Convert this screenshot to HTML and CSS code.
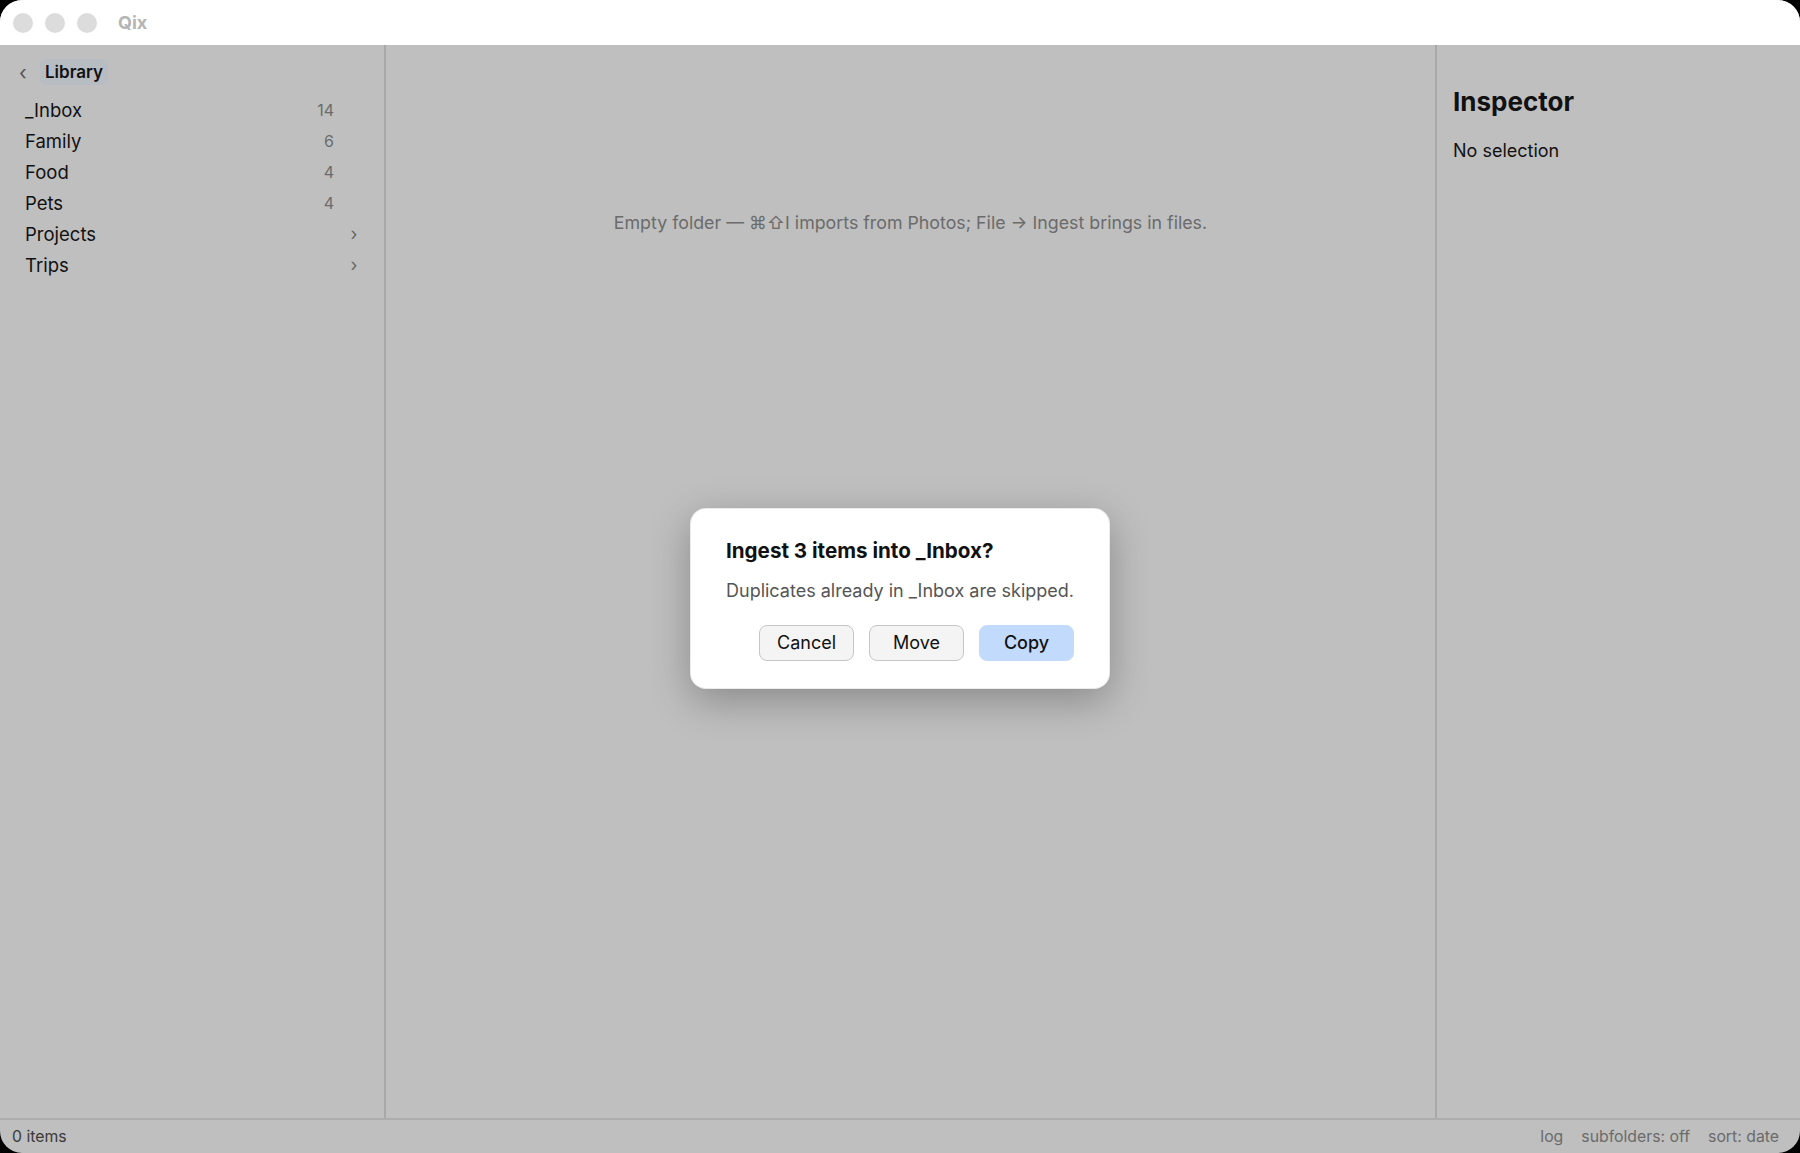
FILE: index.html
```html
<!DOCTYPE html>
<html lang="en">

<head>
    <meta charset="UTF-8">
    <meta name="viewport" content="width=device-width, initial-scale=1.0">
    <title>Qix</title>
    <link rel="stylesheet" href="styles.css">
</head>

<body>

    <div class="window">

        <!-- Title bar -->
        <div class="titlebar">
            <span class="light"></span>
            <span class="light"></span>
            <span class="light"></span>
            <span class="app-name">Qix</span>
        </div>

        <div class="content">

            <!-- Folder sidebar -->
            <aside class="sidebar">
                <div class="back-row">
                    <span class="back-chevron">‹</span>
                    <span class="crumb">Library</span>
                </div>
                <ul class="folders">
                    <li class="folder"><span class="folder-name">_Inbox</span><span class="count">14</span><span class="chev"></span></li>
                    <li class="folder"><span class="folder-name">Family</span><span class="count">6</span><span class="chev"></span></li>
                    <li class="folder"><span class="folder-name">Food</span><span class="count">4</span><span class="chev"></span></li>
                    <li class="folder"><span class="folder-name">Pets</span><span class="count">4</span><span class="chev"></span></li>
                    <li class="folder"><span class="folder-name">Projects</span><span class="count"></span><span class="chev">›</span></li>
                    <li class="folder"><span class="folder-name">Trips</span><span class="count"></span><span class="chev">›</span></li>
                </ul>
            </aside>

            <!-- Grid area -->
            <main class="main">
                <p class="empty-hint">Empty folder — ⌘⇧I imports from Photos; File → Ingest brings in files.</p>
            </main>

            <!-- Inspector -->
            <aside class="inspector">
                <h2 class="inspector-title">Inspector</h2>
                <p class="inspector-empty">No selection</p>
            </aside>

        </div>

        <!-- Status bar -->
        <footer class="statusbar">
            <span class="status-count">0 items</span>
            <span class="status-right">
                <span>log</span>
                <span>subfolders: off</span>
                <span>sort: date</span>
            </span>
        </footer>

        <!-- Ingest confirmation sheet -->
        <div class="overlay">
            <div class="dialog">
                <h3 class="dialog-title">Ingest 3 items into _Inbox?</h3>
                <p class="dialog-text">Duplicates already in _Inbox are skipped.</p>
                <div class="dialog-buttons">
                    <button class="btn">Cancel</button>
                    <button class="btn">Move</button>
                    <button class="btn btn-primary">Copy</button>
                </div>
            </div>
        </div>

    </div>

</body>

</html>
```

FILE: styles.css
```css
body {
    margin: 0;
    background: #000;
    font-family: Inter, "Noto Sans", "DejaVu Sans", sans-serif;
    color: #111;
}

.window {
    position: relative;
    height: 100vh;
    border-radius: 22px;
    overflow: hidden;
    display: flex;
    flex-direction: column;
    background: #bfbfbf;
}

.titlebar {
    height: 45px;
    flex: none;
    background: #fff;
    display: flex;
    align-items: center;
    padding-left: 13px;
    gap: 12px;
}

.light {
    width: 20px;
    height: 20px;
    border-radius: 50%;
    background: #dcdcdc;
}

.app-name {
    margin-left: 9px;
    font-size: 18px;
    font-weight: 700;
    color: #b5b5b5;
}

.content {
    flex: 1;
    display: flex;
    min-height: 0;
}

.sidebar {
    width: 384px;
    flex: none;
    border-right: 2px solid #a8a8a8;
    padding-top: 14px;
}

.back-row {
    display: flex;
    align-items: center;
    height: 26px;
    padding-left: 19px;
}

.back-chevron {
    font-size: 20px;
    color: #555;
    width: 14px;
    line-height: 26px;
    margin-top: 2px;
}

.crumb {
    margin-left: 7px;
    padding: 0 5px;
    height: 26px;
    line-height: 26px;
    border-radius: 5px;
    background: #b8bcc3;
    font-size: 17px;
    font-weight: 600;
}

.folders {
    list-style: none;
    margin: 9px 0 0;
    padding: 0;
}

.folder {
    display: flex;
    align-items: center;
    height: 31px;
    padding-left: 25px;
    padding-right: 10px;
    font-size: 18.5px;
}

.folder-name {
    flex: 1;
}

.count {
    font-size: 16px;
    color: #6b6b6b;
    text-align: right;
}

.chev {
    width: 40px;
    text-align: center;
    color: #666;
    font-size: 18px;
}

.main {
    flex: 1;
    display: flex;
    justify-content: center;
}

.empty-hint {
    margin: 167px 0 0;
    font-size: 17.8px;
    color: #6b6b6b;
}

.inspector {
    width: 347px;
    flex: none;
    border-left: 2px solid #a8a8a8;
    padding: 41px 0 0 16px;
}

.inspector-title {
    margin: 0;
    font-size: 26px;
    line-height: 32px;
    font-weight: 700;
}

.inspector-empty {
    margin: 22px 0 0;
    font-size: 18px;
    line-height: 22px;
}

.statusbar {
    height: 33px;
    flex: none;
    border-top: 2px solid #adadad;
    display: flex;
    align-items: center;
    justify-content: space-between;
    padding: 0 21px 0 12px;
    font-size: 15.8px;
}

.status-count {
    color: #3a3a3a;
}

.status-right {
    display: flex;
    gap: 18px;
    color: #6b6b6b;
}

.overlay {
    position: absolute;
    top: 45px;
    left: 0;
    right: 0;
    bottom: 0;
    display: flex;
    align-items: center;
    justify-content: center;
}

.dialog {
    width: 348px;
    margin-bottom: 2px;
    padding: 30px 35px 27px;
    background: #fff;
    border-radius: 16px;
    border: 1px solid rgba(0, 0, 0, 0.08);
    box-shadow: 0 12px 40px rgba(0, 0, 0, 0.28);
}

.dialog-title {
    margin: 0;
    font-size: 20.6px;
    line-height: 24px;
    font-weight: 700;
}

.dialog-text {
    margin: 17px 0 0;
    font-size: 18px;
    line-height: 22px;
    color: #555;
}

.dialog-buttons {
    display: flex;
    justify-content: flex-end;
    gap: 15px;
    margin-top: 23px;
}

.btn {
    width: 95px;
    height: 36px;
    border-radius: 8px;
    border: 1px solid #c6c6c6;
    background: #f4f4f4;
    font-family: inherit;
    font-size: 18px;
    color: #111;
}

.btn-primary {
    border-color: #c2dafb;
    background: #c2dafb;
    font-weight: 500;
}
```
